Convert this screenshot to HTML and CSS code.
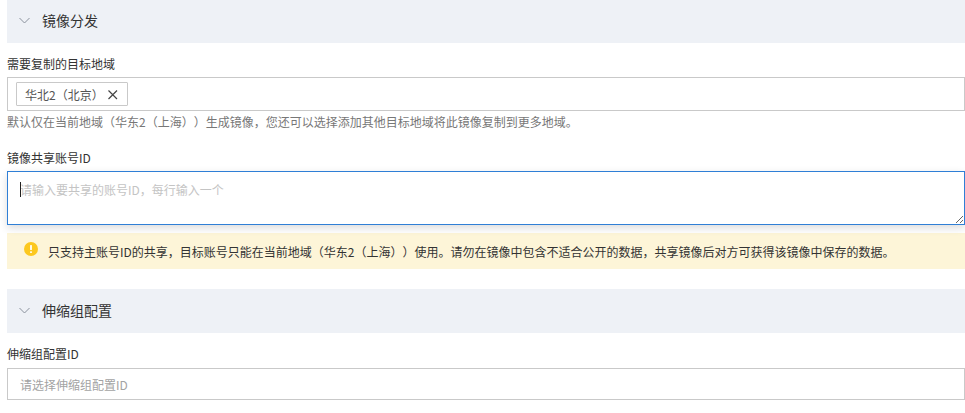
FILE: index.html
```html
<!DOCTYPE html>
<html lang="zh-CN">
<head>
<meta charset="utf-8">
<title>镜像分发</title>
<link rel="stylesheet" href="styles.css">
</head>
<body>
<section class="section-head">
  <svg class="chevron" width="11" height="12" viewBox="0 0 11 12"><path d="M.5 3 5.500 8 10.500 3" fill="none" stroke="#8a919c" stroke-width="1"/></svg>
  <span class="section-title">镜像分发</span>
</section>
<div class="field field-first">
  <label class="label">需要复制的目标地域</label>
  <div class="tag-input">
    <span class="tag">华北2（北京）
      <svg class="tag-x" width="11" height="11" viewBox="0 0 11 11"><path d="M1.500 1.500 10 10M10 1.500 1.500 10" stroke="#444" stroke-width="1.200" fill="none"/></svg>
    </span>
  </div>
  <p class="help">默认仅在当前地域（华东2（上海））生成镜像，您还可以选择添加其他目标地域将此镜像复制到更多地域。</p>
</div>
<div class="field field-share">
  <label class="label">镜像共享账号ID</label>
  <div class="area-wrap">
    <textarea class="area" placeholder="请输入要共享的账号ID，每行输入一个"></textarea>
    <span class="caret"></span>
  </div>
</div>
<div class="alert">
  <svg class="alert-icon" width="14" height="14" viewBox="0 0 14 14"><circle cx="7" cy="7" r="7" fill="#fcc81f"/><rect x="6.100" y="3" width="1.800" height="5" rx=".6" fill="#fff"/><rect x="6.100" y="9.200" width="1.800" height="1.800" rx=".6" fill="#fff"/></svg>
  <span>只支持主账号ID的共享，目标账号只能在当前地域（华东2（上海））使用。请勿在镜像中包含不适合公开的数据，共享镜像后对方可获得该镜像中保存的数据。</span>
</div>
<section class="section-head section-second">
  <svg class="chevron" width="11" height="12" viewBox="0 0 11 12"><path d="M.5 3 5.500 8 10.500 3" fill="none" stroke="#8a919c" stroke-width="1"/></svg>
  <span class="section-title">伸缩组配置</span>
</section>
<div class="field field-scale">
  <label class="label">伸缩组配置ID</label>
  <input class="text-input" type="text" placeholder="请选择伸缩组配置ID">
</div>
</body>
</html>
```
FILE: styles.css
```css
* { box-sizing: border-box; }
html, body { margin: 0; padding: 0; background: #fff; }
body {
  width: 965px;
  height: 413px;
  overflow: hidden;
  padding-left: 7px;
  font-family: "Noto Sans CJK SC", "Liberation Sans", sans-serif;
  font-size: 12px;
  color: #333;
  text-spacing-trim: space-all;
}
.section-head {
  height: 43px;
  background: #eef1f6;
  display: flex;
  align-items: center;
  padding-left: 12px;
  gap: 12px;
  font-size: 14px;
  color: #333;
}
.section-title { line-height: 20px; padding-bottom: 3px; }
.section-second { height: 44px; margin-top: 20px; }
.chevron { flex: none; margin-bottom: 1px; }
.field { display: flex; flex-direction: column; }
.field-first { padding-top: 13px; }
.field-share { padding-top: 17px; }
.field-scale { padding-top: 13px; }
.label { display: block; height: 21px; line-height: 16px; color: #333; }
.field-share .label { height: 22px; line-height: 18px; }
.field-scale .label { height: 22px; }
.tag-input {
  height: 34px;
  border: 1px solid #c9c9c9;
  padding: 4px 8px;
  display: flex;
  align-items: flex-start;
}
.tag {
  height: 24px;
  width: 112px;
  border: 1px solid #c9c9c9;
  border-radius: 1px;
  display: flex;
  align-items: center;
  justify-content: space-between;
  padding: 0 9px 0 8px;
  color: #555;
  white-space: nowrap;
}
.tag-x { flex: none; }
.help { margin: 2px 0 0; height: 19px; line-height: 18px; color: #777; white-space: nowrap; }
.area-wrap { position: relative; height: 54px; }
.area {
  display: block;
  width: 100%;
  height: 54px;
  border: 1px solid #2f7fd6;
  border-radius: 0;
  padding: 8px 12px;
  margin: 0;
  outline: none;
  resize: vertical;
  font: inherit;
  line-height: 20px;
  box-shadow: 0 3px 8px rgba(0, 0, 0, .14);
  background: #fff;
  text-spacing-trim: space-all;
}
.area::placeholder { color: #c4c4c4; opacity: 1; }
.text-input::placeholder { color: #a3a3a3; opacity: 1; }
.caret {
  position: absolute;
  left: 13px;
  top: 11px;
  width: 1px;
  height: 15px;
  background: #222;
}
.alert {
  margin-top: 8px;
  height: 36px;
  background: #fdf5d8;
  display: flex;
  align-items: center;
  padding-left: 17px;
  gap: 10px;
  color: #333;
  white-space: nowrap;
}
.alert-icon { flex: none; margin-top: -5px; }
.text-input {
  display: block;
  width: 100%;
  height: 32px;
  border: 1px solid #c9c9c9;
  border-radius: 0;
  padding: 0 12px;
  outline: none;
  font: inherit;
  background: #fff;
}
```
